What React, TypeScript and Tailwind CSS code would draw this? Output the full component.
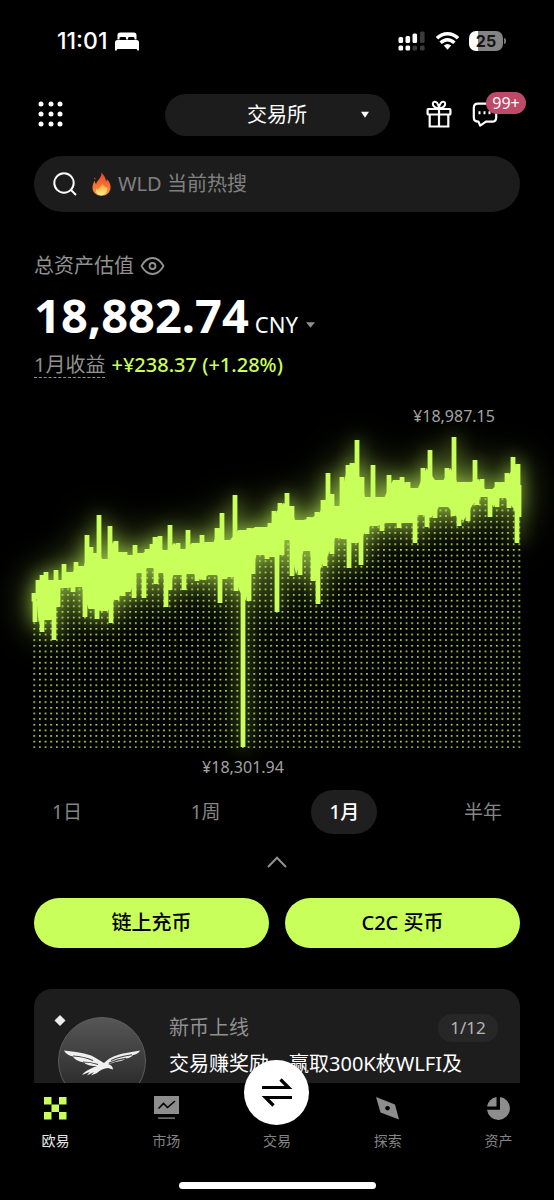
import { useState } from "react";

const PERIODS = ["1日", "1周", "1月", "半年"];

// Highs and lows of the asset curve, [x, y] in chart units
const HIGHS = [
  [34, 593], [38, 580], [42, 575], [46, 572], [51, 580], [56, 570], [61, 580], [64, 564], [69, 572],
  [76, 562], [81, 566], [87, 535], [91, 547], [95, 553], [99, 515], [106, 559], [110, 526], [116, 541],
  [119, 552], [125, 552], [130, 555], [135, 545], [139, 553], [147, 549], [152, 544], [155, 537],
  [160, 536], [165, 550], [170, 525], [178, 543], [183, 549], [188, 530], [196, 543], [202, 535],
  [210, 542], [217, 528], [222, 513], [225, 540], [235, 495], [242, 530], [249, 528], [257, 527],
  [264, 527], [270, 523], [274, 511], [280, 503], [287, 493], [292, 506], [298, 520], [309, 517],
  [317, 512], [323, 500], [328, 473], [332, 494], [337, 506], [342, 477], [348, 465], [352, 463],
  [357, 440], [362, 477], [368, 497], [373, 465], [380, 497], [389, 475], [397, 480], [402, 477],
  [408, 482], [413, 488], [423, 468], [430, 450], [440, 480], [447, 468], [454, 437], [460, 482],
  [467, 482], [475, 460], [482, 479], [488, 489], [497, 482], [503, 482], [507, 473], [513, 457],
  [518, 464], [519, 485],
];

const LOWS = [
  [35, 622], [42, 632], [49, 620], [54, 640], [58, 607], [63, 588], [73, 592], [79, 587], [85, 617],
  [92, 609], [97, 619], [105, 611], [111, 623], [117, 600], [123, 596], [127, 592], [134, 598],
  [139, 573], [144, 598], [150, 568], [156, 584], [160, 573], [166, 607], [170, 590], [177, 575],
  [184, 590], [191, 574], [197, 581], [204, 580], [213, 575], [220, 603], [225, 579], [232, 577],
  [236, 591], [243, 747], [249, 601], [253, 574], [260, 555], [267, 559], [273, 557], [277, 612],
  [282, 555], [287, 540], [292, 576], [300, 575], [307, 551], [313, 581], [318, 604], [325, 566],
  [332, 554], [338, 538], [343, 539], [349, 568], [355, 543], [361, 565], [367, 534], [373, 526],
  [382, 531], [390, 523], [399, 528], [410, 523], [415, 543], [420, 515], [427, 527], [435, 518],
  [443, 507], [453, 516], [459, 526], [468, 521], [477, 505], [485, 497], [490, 517], [497, 507],
  [502, 498], [509, 508], [517, 543], [519, 517],
];

// Middle line that the spikes start from
const MIDDLE = [
  [33, 602], [50, 592], [70, 581], [92, 580], [115, 576], [140, 563], [165, 560], [190, 560],
  [215, 557], [240, 555], [260, 543], [280, 534], [305, 537], [330, 524], [352, 513], [375, 512],
  [400, 503], [430, 500], [455, 496], [480, 492], [500, 490], [521, 490],
];

const middleAt = (x: number) => {
  const i = Math.max(1, MIDDLE.findIndex((p) => p[0] >= x));
  const [x0, y0] = MIDDLE[i - 1];
  const [x1, y1] = MIDDLE[i];
  return y0 + ((y1 - y0) * (x - x0)) / (x1 - x0);
};

const toLine = (points: number[][]) => points.map((p) => p.join(" ")).join("L");

// The dense part: between two neighbours only the weaker one counts
const envelope = (points: number[][], weaker: (a: number, b: number) => number) =>
  points.slice(1).map(([x, y], i) => [(x + points[i][0]) / 2, weaker(y, points[i][1])]);

const bandPath =
  "M" + toLine([...envelope(HIGHS, Math.max), ...envelope(LOWS, Math.min).reverse()]) + "Z";
const spikePath = [...HIGHS, ...LOWS].map(([x, y]) => `M${x} ${y}V${middleAt(x)}`).join("");
const areaPath = `M${toLine(MIDDLE)}V748H33Z`;

const Curve = () => (
  <>
    <path d={bandPath} fill="#c8ff5a" stroke="none" />
    <path d={spikePath} strokeWidth="4.800" />
  </>
);

const AssetChart = () => (
  <svg
    viewBox="0 400 554 384"
    className="block w-full overflow-visible"
    role="img"
    aria-label="1月收益"
  >
    <defs>
      <pattern id="dots" x="33.4" y="402.4" width="5.64" height="5.64" patternUnits="userSpaceOnUse">
        <rect width="1.7" height="1.6" fill="#b9e65c" />
      </pattern>
      <filter id="glow" x="-80" y="360" width="720" height="440" filterUnits="userSpaceOnUse">
        <feGaussianBlur stdDeviation="9" />
      </filter>
      <filter id="halo" x="-80" y="360" width="720" height="440" filterUnits="userSpaceOnUse">
        <feGaussianBlur stdDeviation="20" />
      </filter>
    </defs>
    <g fill="none" stroke="#c8ff5a">
      <g filter="url(#halo)" opacity="0.5">
        <Curve />
      </g>
      <g filter="url(#glow)" opacity="0.6">
        <Curve />
      </g>
    </g>
    <path d={areaPath} fill="url(#dots)" />
    <g fill="none" stroke="#c8ff5a">
      <Curve />
    </g>
    <g fill="#a3a3a3" fontSize="16" textAnchor="middle">
      <text x="454" y="422">¥18,987.15</text>
      <text x="243" y="773">¥18,301.94</text>
    </g>
  </svg>
);

const StatusBar = () => (
  <div className="flex h-[82px] shrink-0 items-center justify-between pl-[57px] pr-12">
    <div className="flex items-center gap-2">
      <span className="font-[Inter] text-[23px] font-medium">11:01</span>
      <svg width="24" height="19" viewBox="0 0 24 19" fill="#fff">
        <path d="M2.500 7.500V3.200Q2.500.5 5.200.5h13.600q2.700 0 2.700 2.700V7.500h-2V6.300q0-1.300-1.300-1.300h-3.900q-1.200 0-1.200 1.200v1.300h-2V6.200q0-1.200-1.200-1.200H5.800q-1.300 0-1.300 1.300v1.200Z" />
        <path d="M0 18.500V10.500Q0 8 2.500 8h19Q24 8 24 10.500v8h-1.600l-.8-1.500H2.400l-.8 1.500Z" />
      </svg>
    </div>
    <div className="flex items-center gap-[10px]">
      <svg width="28" height="20" viewBox="0 0 28 20" fill="#fff">
        <rect x="0.500" y="6" width="4.600" height="6" rx="1.500" />
        <rect x="7.500" y="5" width="4.600" height="7" rx="1.500" />
        <rect x="14.500" y="2.500" width="4.600" height="9.500" rx="1.500" />
        <rect x="22" y="0.500" width="4.600" height="11.500" rx="1.500" fill="#3a3a3a" />
        <rect x="0.500" y="14.500" width="4.600" height="5" rx="1.500" />
        <rect x="7.500" y="14.500" width="4.600" height="5" rx="1.500" />
        <rect x="14.500" y="14.500" width="4.600" height="5" rx="1.500" fill="#3a3a3a" />
        <rect x="22" y="14.500" width="4.600" height="5" rx="1.500" fill="#3a3a3a" />
      </svg>
      <svg width="23" height="18" viewBox="0 0 23 18" fill="none" stroke="#fff" strokeWidth="3.400">
        <path d="M1 6.200Q5.500 1.800 11.500 1.800T22 6.200" />
        <path d="M4.600 10.800Q7.800 7.700 11.500 7.700T18.400 10.800" />
        <path d="M7.800 13.600Q11.500 10.600 15.200 13.600L11.500 17.800Z" fill="#fff" stroke="none" />
      </svg>
      <div className="flex items-center gap-px">
        <div className="flex h-5 w-[34px] items-center justify-center rounded-[7px] bg-linear-to-r from-white from-26% to-[#848484] to-26% font-[Inter] text-base font-bold text-[#151515]">
          25
        </div>
        <div className="h-[6px] w-[2px] rounded-r bg-[#777]" />
      </div>
    </div>
  </div>
);

const GridIcon = () => (
  <svg width="26" height="28" viewBox="0 0 26 28" fill="#fff">
    {[3, 13, 22].map((x) =>
      [3, 13, 23].map((y) => <circle key={`${x}-${y}`} cx={x} cy={y} r="2.500" />)
    )}
  </svg>
);

const GiftIcon = () => (
  <svg width="26" height="30" viewBox="0 0 26 30" fill="none" stroke="#fff" strokeWidth="2.200">
    <rect x="1.600" y="9" width="22.800" height="5.500" rx=".8" />
    <path d="M3.700 14.500V26.500H22.300V14.500M13 9V26.500" />
    <path
      d="M13 8.500C10 8 6.800 6.500 6.800 3.800 6.800 1.500 9.800.8 11.200 3 12.300 4.700 13 7 13 8.500ZM13 8.500C16 8 19.200 6.500 19.200 3.800 19.200 1.500 16.200.8 14.800 3 13.700 4.700 13 7 13 8.500Z"
      strokeWidth="2"
    />
  </svg>
);

const ChatIcon = () => (
  <svg width="26" height="26" viewBox="0 0 26 26" fill="none" stroke="#fff" strokeWidth="2.200">
    <path
      d="M6 1.700H20Q24.200 1.700 24.200 5.900V15.500Q24.200 19.700 20 19.700H14L8.200 23.600 6.500 19.700Q1.800 19.700 1.800 15.500V5.900Q1.800 1.700 6 1.700Z"
      strokeLinejoin="round"
    />
    <path d="M7.500 9.300v3M12.500 9.300v3M17.500 9.300v3" strokeWidth="2" />
  </svg>
);

const FireIcon = () => (
  <svg width="19" height="24" viewBox="0 0 19 24">
    <defs>
      <linearGradient id="flame" x1="0" y1="0" x2="0" y2="1">
        <stop offset="0" stopColor="#e8442b" />
        <stop offset="0.600" stopColor="#f97432" />
        <stop offset="1" stopColor="#fda43c" />
      </linearGradient>
      <linearGradient id="flame-core" x1="0" y1="0" x2="0" y2="1">
        <stop offset="0" stopColor="#ff9a36" />
        <stop offset="1" stopColor="#fff08a" />
      </linearGradient>
    </defs>
    <path
      d="M9.500.5C11.500 2.800 14 6 14 9.500c.7-.7.8-1.500.7-2.500C17.500 9.500 18.800 12.500 18.500 16 18.200 20.500 14.500 23.700 9.500 23.700S.8 20.500.5 16.200C.3 13 1.500 10.500 2.800 8.500 3 10.200 3.300 11.300 4.200 12 4.500 8.500 9.700 6.500 9.500.5Z"
      fill="url(#flame)"
    />
    <path d="M2.500 5.500c1 .4 1.300 1.400.7 2.200-1-.5-1.200-1.300-.7-2.200Z" fill="#e8442b" />
    <path
      d="M10.200 11C11 13.500 13.500 14.500 13.800 16L15 14.500C16 18.500 14 23.300 9.500 23.300S3.300 20 4.300 16.500L6 18C6 15 10.500 14.500 10.200 11Z"
      fill="url(#flame-core)"
    />
  </svg>
);

const Header = () => (
  <header className="grid grid-cols-[1fr_225px_1fr] items-center px-[34px] pt-3">
    <button aria-label="菜单" className="ml-1 justify-self-start">
      <GridIcon />
    </button>
    <button className="relative flex h-[42px] items-center justify-center rounded-full bg-[#1c1c1c] text-xl">
      交易所
      <svg className="absolute right-5" width="10" height="8" viewBox="0 0 10 8">
        <path d="M1 .8H9L5 6.800Z" fill="#fff" />
      </svg>
    </button>
    <div className="flex items-center gap-5 justify-self-end pr-[22px]">
      <button aria-label="礼物">
        <GiftIcon />
      </button>
      <button aria-label="消息" className="relative">
        <ChatIcon />
        <span className="absolute -top-[10px] left-[14px] flex h-[22px] w-10 items-center justify-center rounded-full bg-[#bd4a69] text-base">
          99+
        </span>
      </button>
    </div>
  </header>
);

const SearchBar = () => (
  <label className="mx-[34px] mt-5 flex h-14 items-center rounded-full bg-[#1c1c1c] px-[18px]">
    <svg width="26" height="26" viewBox="0 0 26 26" fill="none" stroke="#fff" strokeWidth="2">
      <circle cx="12" cy="12" r="9.700" />
      <path d="M19 19L24 24" />
    </svg>
    <span className="ml-[14px] mr-[7px]">
      <FireIcon />
    </span>
    <input
      aria-label="搜索"
      placeholder="WLD 当前热搜"
      className="min-w-0 flex-1 bg-transparent text-xl outline-none placeholder:text-[#808080]"
    />
  </label>
);

const Balance = () => (
  <section className="px-[34px] pt-10">
    <div className="flex h-7 items-center gap-[6px] text-xl text-[#919191]">
      总资产估值
      <button aria-label="隐藏资产">
        <svg width="25" height="20" viewBox="0 0 25 20" fill="none" stroke="#919191" strokeWidth="1.800">
          <path d="M1.500 10Q6 2 12.500 2T23.500 10Q19 18 12.500 18T1.500 10Z" strokeLinejoin="round" />
          <circle cx="12.500" cy="10" r="3" />
        </svg>
      </button>
    </div>
    <div className="flex h-[72px] items-baseline">
      <span className="text-[47px] leading-[70px] font-bold">18,882.74</span>
      <button className="ml-[6px] flex items-center gap-2 text-[22px]">
        CNY
        <svg width="9" height="6" viewBox="0 0 9 6">
          <path d="M0 .3H9L4.500 5.800Z" fill="#8f8f8f" />
        </svg>
      </button>
    </div>
    <div className="flex h-[26px] items-center gap-[6px] text-xl">
      <span className="border-b border-dashed border-[#919191] leading-6 text-[#919191]">
        1月收益
      </span>
      <span className="font-medium text-[#c8ff5a]">+¥238.37 (+1.28%)</span>
    </div>
  </section>
);

const PromoCard = () => (
  <section className="mx-[34px] mt-[41px] flex rounded-[18px] bg-[#1d1d1e] px-[22px] pt-6 pb-10">
    <svg width="92" height="100" viewBox="0 0 92 100" className="shrink-0 overflow-visible">
      <defs>
        <linearGradient id="coin" x1="0" y1="0" x2="0" y2="1">
          <stop offset="0" stopColor="#575757" />
          <stop offset="1" stopColor="#202020" />
        </linearGradient>
      </defs>
      <path d="M4 2L9.500 7.500 4 13-1.500 7.500Z" fill="#ececec" />
      <circle cx="46" cy="48" r="43.500" fill="url(#coin)" stroke="#5c5c5c" />
      <path
        d="M8 37.500C18 38.500 31 40 38 44L48 50C54 44 62 41.500 70 40L84 37.500C83 40 80 41.500 77 42 76 44 73 45 70 45.500 67 48 63 48.500 59 49 57 50 54 50.500 52 51 55 52 57 53.500 57 56.500L52 55C48 55.500 44 57 41 60L35 62.500 38 59 31 62.500 33.500 59 26 62C30 57 36 55 41 53 36 53.500 30 52 28 49.500 22 48.500 18 46 17 43.500 12 42.500 9 40 8 37.500Z"
        fill="#f0f0f0"
      />
      <path
        d="M17 43Q28 43.500 37 47.500M27 49Q35 49 42 51.500M55 47.500Q64 43.500 76 41.800M53 50Q61 46.800 70 45.400"
        fill="none"
        stroke="#454545"
        strokeWidth="1.100"
      />
    </svg>
    <div className="ml-[21px] min-w-0 flex-1">
      <div className="flex h-[30px] items-center justify-between">
        <h2 className="text-xl text-[#919191]">新币上线</h2>
        <span className="flex h-7 w-[60px] items-center justify-center rounded-full bg-[#272728] text-[17px] text-[#b5b5b5]">
          1/12
        </span>
      </div>
      <p className="mt-[6px] text-xl leading-[30px] whitespace-nowrap">
        交易赚奖励，赢取300K枚WLFI及
      </p>
    </div>
  </section>
);

const TABS = [
  {
    label: "欧易",
    icon: (
      <path
        d="M1 1h7.500v7.500H1ZM16 1h7.500v7.500H16ZM8.500 8.500H16V16H8.500ZM1 16h7.500v7.500H1ZM16 16h7.500v7.500H16Z"
        fill="#c8ff5a"
      />
    ),
  },
  {
    label: "市场",
    icon: (
      <>
        <path d="M0 0H25V18H0ZM4 21.500H21V22.800H4Z" fill="#8d8d8d" />
        <path d="M4.500 12.500L9.500 7.500 13.500 11.500 21 5" fill="none" stroke="#000" strokeWidth="1.600" />
      </>
    ),
  },
  { label: "交易", icon: null },
  {
    label: "探索",
    icon: (
      <path
        d="M1 1L20 8.500 24 23.500 5.500 16.500ZM12.500 9.900a2.300 2.300 0 1 0 .01 0Z"
        fill="#8d8d8d"
        fillRule="evenodd"
      />
    ),
  },
  {
    label: "资产",
    icon: (
      <>
        <path d="M10.500 1V10.500H1A11.500 11.500 0 0 1 10.500 1Z" fill="#8d8d8d" />
        <path d="M14 1A11.500 11.500 0 1 1 1 13.800H14Z" fill="#8d8d8d" />
      </>
    ),
  },
];

const BottomNav = () => (
  <nav className="relative shrink-0 bg-black">
    <div className="grid grid-cols-5">
      {TABS.map((tab, idx) => (
        <a
          key={tab.label}
          href="#"
          className={`flex flex-col items-center pt-[13px] text-sm ${
            idx === 0 ? "text-[#e8e8e8]" : "text-[#858585]"
          }`}
        >
          {tab.icon ? (
            <svg width="25" height="25" viewBox="0 0 25 25">
              {tab.icon}
            </svg>
          ) : (
            <span className="-mt-9 -mb-1 flex size-[65px] items-center justify-center rounded-full bg-white">
              <svg width="32" height="30" viewBox="0 0 32 30" fill="none" stroke="#000" strokeWidth="3.200">
                <path d="M1 9.500H27.500L19.500 1.500M31 19.500H4.500L12.500 27.500" />
              </svg>
            </span>
          )}
          <span className="mt-[10px] leading-5">{tab.label}</span>
        </a>
      ))}
    </div>
    <div className="flex h-[49px] items-end justify-center pb-[11px]">
      <div className="h-[7px] w-[197px] rounded-full bg-white" />
    </div>
  </nav>
);

const App = () => {
  const [period, setPeriod] = useState("1月");

  return (
    <div className="flex h-screen flex-col overflow-hidden bg-black font-['Noto_Sans','Noto_Sans_CJK_SC',sans-serif] text-white">
      <StatusBar />
      <main className="min-h-0 flex-1 overflow-y-auto overflow-x-hidden [scrollbar-width:none]">
        <Header />
        <SearchBar />
        <Balance />
        <div className="pt-[22px]">
          <AssetChart />
        </div>

        {/* Period switch */}
        <div className="mt-[6px] flex justify-between pl-[34px] pr-[38px]">
          {PERIODS.map((p) => (
            <button
              key={p}
              onClick={() => setPeriod(p)}
              aria-pressed={p === period}
              className={`h-11 w-[66px] rounded-full text-[19px] ${
                p === period ? "bg-[#1f1f1f] font-medium text-white" : "text-[#858585]"
              }`}
            >
              {p}
            </button>
          ))}
        </div>
        <button aria-label="收起" className="mx-auto mt-[22px] block">
          <svg width="20" height="12" viewBox="0 0 20 12" fill="none" stroke="#919191" strokeWidth="2">
            <path d="M1 11L10 1.800 19 11" />
          </svg>
        </button>

        <div className="mt-[30px] grid grid-cols-2 gap-4 px-[34px] text-xl font-medium text-black">
          <button className="h-[50px] rounded-full bg-[#c8ff5a]">链上充币</button>
          <button className="h-[50px] rounded-full bg-[#c8ff5a]">C2C 买币</button>
        </div>

        <PromoCard />
      </main>
      <BottomNav />
    </div>
  );
};

export default App;
